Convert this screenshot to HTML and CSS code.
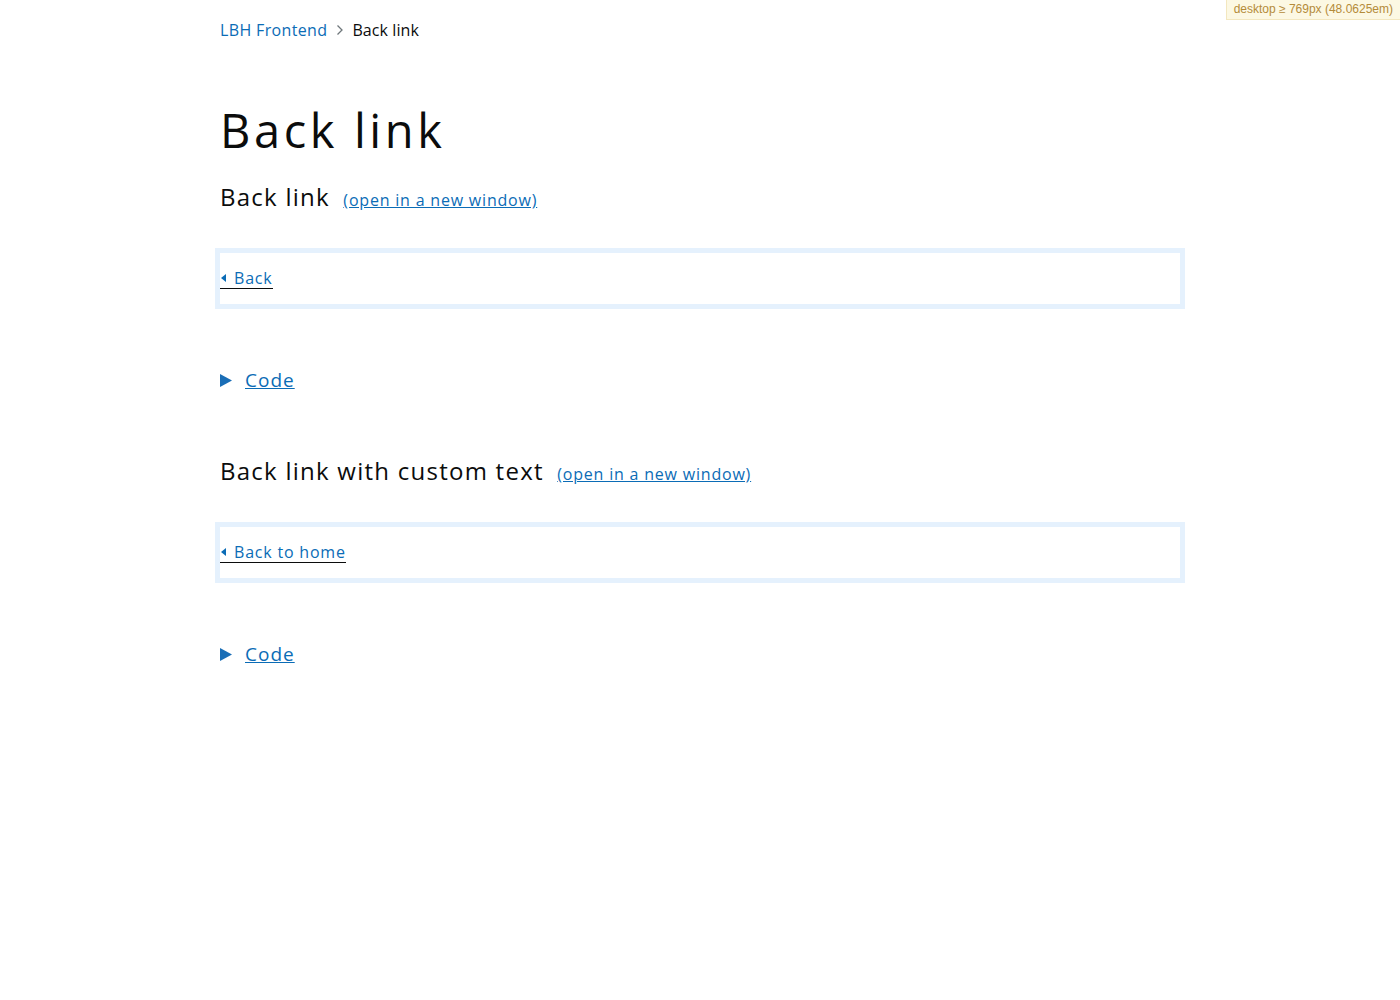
FILE: index.html
```html
<!DOCTYPE html>
<html lang="en">
<head>
<meta charset="utf-8">
<title>Back link</title>
<link rel="stylesheet" href="styles.css">
</head>
<body>
<div class="mq">desktop ≥ 769px (48.0625em)</div>
<div class="page">
  <nav class="breadcrumbs">
    <a class="crumb-link" href="#">LBH Frontend</a>
    <svg class="crumb-sep" width="8" height="12" viewBox="0 0 8 12"><path d="M1.5 1.5 L6 6 L1.5 10.5" fill="none" stroke="#6f777b" stroke-width="1.3"/></svg>
    <span class="crumb-current">Back link</span>
  </nav>

  <h1 class="title">Back link</h1>

  <section class="example">
    <h2 class="example-title">Back link <a class="example-open" href="#">(open in a new window)</a></h2>
    <div class="frame">
      <a class="back-link" href="#">Back</a>
    </div>
    <div class="code">
      <svg class="code-arrow" width="12" height="13" viewBox="0 0 12 13"><path d="M0 0 L12 6.5 L0 13 Z" fill="#1a6eb6"/></svg>
      <a class="code-link" href="#">Code</a>
    </div>
  </section>

  <section class="example">
    <h2 class="example-title">Back link with custom text <a class="example-open" href="#">(open in a new window)</a></h2>
    <div class="frame">
      <a class="back-link" href="#">Back to home</a>
    </div>
    <div class="code">
      <svg class="code-arrow" width="12" height="13" viewBox="0 0 12 13"><path d="M0 0 L12 6.5 L0 13 Z" fill="#1a6eb6"/></svg>
      <a class="code-link" href="#">Code</a>
    </div>
  </section>
</div>
</body>
</html>
```
FILE: styles.css
```css
html, body {
  margin: 0;
  padding: 0;
  background: #ffffff;
}
body {
  font-family: "Open Sans", "Liberation Sans", sans-serif;
  color: #0b0c0c;
}
.mq {
  position: absolute;
  top: 0;
  right: 0;
  padding: 2px 7px 3px 7px;
  background: #fcf8e3;
  border: 1px solid #f3e7bf;
  border-top: none;
  border-right: none;
  color: #b48b3a;
  font-family: "Liberation Sans", Arial, sans-serif;
  font-size: 12px;
  line-height: 14px;
}
.page {
  width: 960px;
  margin: 0 auto;
  padding-top: 20px;
}
.breadcrumbs {
  display: flex;
  align-items: center;
  font-size: 16px;
  line-height: 20px;
  height: 20px;
  letter-spacing: 0.35px;
}
.crumb-link {
  color: #0b6cb6;
  text-decoration: none;
}
.crumb-sep {
  margin: 0 8px 0 9px;
}
.crumb-current {
  color: #0b0c0c;
  letter-spacing: 0.1px;
}
.title {
  margin: 0;
  padding-top: 62px;
  font-size: 47px;
  line-height: 56px;
  font-weight: 400;
  letter-spacing: 3.6px;
}
.example-title {
  margin: 24px 0 0 0;
  font-size: 24px;
  line-height: 30px;
  font-weight: 400;
  letter-spacing: 1.25px;
}
.example-title .example-open {
  font-size: 16px;
  margin-left: 6px;
  color: #0b6cb6;
  letter-spacing: 0.8px;
}
.frame {
  margin: 33px -5px 0 -5px;
  border: 5px solid #e5f1fd;
  height: 51px;
  display: flex;
  align-items: center;
}
.back-link {
  position: relative;
  padding-left: 14px;
  font-size: 16px;
  line-height: 20px;
  color: #0b6cb6;
  text-decoration: none;
  letter-spacing: 0.8px;
  border-bottom: 1px solid #0b0c0c;
}
.back-link::before {
  content: "";
  position: absolute;
  left: 1px;
  top: 6px;
  border-top: 4px solid transparent;
  border-bottom: 4px solid transparent;
  border-right: 5px solid #0b6cb6;
}
.code {
  display: flex;
  align-items: center;
  margin-top: 59px;
  margin-bottom: 64px;
  height: 24px;
}
.code-arrow {
  margin-right: 13px;
}
.code-link {
  font-size: 19px;
  line-height: 24px;
  color: #0b6cb6;
  letter-spacing: 1px;
}
```
